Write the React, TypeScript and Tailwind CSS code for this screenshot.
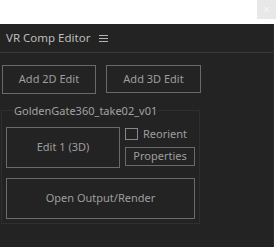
const BTN = "border border-[#6a6a6a] bg-[#232323] text-[#9e9e9e] flex items-center justify-center";

function Hamburger() {
  return (
    <svg width="9" height="9" viewBox="0 0 9 9" className="text-[#b4b4b4]">
      <path d="M0 1.5H9M0 4.5H9M0 7.5H9" stroke="currentColor" strokeWidth="1" />
    </svg>
  );
}

export default function App() {
  return (
    <div className="w-[276px] h-[247px] bg-white flex flex-col overflow-hidden" style={{ fontFamily: '"Noto Sans", "Open Sans", sans-serif' }}>
      {/* host strip with close */}
      <div className="h-[24px] flex justify-end items-start">
        <div className="w-[19px] h-[19px] bg-[#e8e8e8] flex items-center justify-center text-[#f6f6f6] text-[13px] leading-none">×</div>
      </div>

      {/* panel */}
      <div className="flex-1 bg-[#232323] border-r border-[#2c2c2c] w-[274px] flex flex-col">
        <div className="h-[29px] flex items-center px-[6px] gap-[9px] border-b border-[#383838]">
          <span className="text-[11.5px] text-[#bdbdbd] leading-none">VR Comp Editor</span>
          <Hamburger />
        </div>

        <div className="pt-[12px] pl-[2px] flex gap-[10px]">
          <button className={`${BTN} w-[94px] h-[29px] text-[11px]`}>Add 2D Edit</button>
          <button className={`${BTN} w-[95px] h-[28px] text-[11px]`}>Add 3D Edit</button>
        </div>

        <fieldset className="ml-[1px] mt-[9px] w-[199px] border border-[#2f2f2f] pl-[4px] pb-[4px]">
          <legend className="ml-[7px] px-[1px] text-[11px] text-[#a2a2a2] leading-[15px]">GoldenGate360_take02_v01</legend>
          <div className="mt-[9px] flex gap-[5px]">
            <button className={`${BTN} w-[114px] h-[41px] text-[11px]`}>Edit 1 (3D)</button>
            <div className="flex flex-col">
              <label className="mt-[1px] flex items-center gap-[5px] text-[11px] text-[#9e9e9e] leading-[12px]">
                <span className="w-[13px] h-[12px] border border-[#888888]" />
                Reorient
              </label>
              <button className={`${BTN} mt-[7px] w-[70px] h-[19px] text-[11px]`}>Properties</button>
            </div>
          </div>
          <button className={`${BTN} mt-[10px] w-[189px] h-[41px] text-[11px]`}>Open Output/Render</button>
        </fieldset>
      </div>
    </div>
  );
}
